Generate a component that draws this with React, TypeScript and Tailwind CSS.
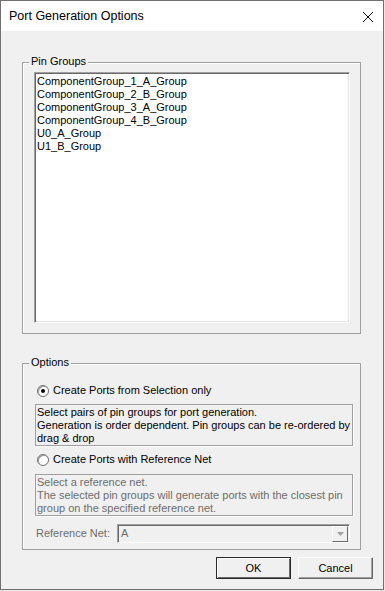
import React, { useState } from 'react';

const PIN_GROUPS = [
  'ComponentGroup_1_A_Group',
  'ComponentGroup_2_B_Group',
  'ComponentGroup_3_A_Group',
  'ComponentGroup_4_B_Group',
  'U0_A_Group',
  'U1_B_Group',
];

function GroupBox({
  label,
  className,
  children,
}: {
  label: string;
  className: string;
  children: React.ReactNode;
}) {
  return (
    <div className={`relative w-[339px] border border-[#a0a0a0] shadow-[inset_1px_1px_0_#ffffff] ${className}`}>
      <span className="absolute -top-[8px] left-[6px] bg-[#f0f0f0] px-[2px] leading-[13px]">{label}</span>
      {children}
    </div>
  );
}

function Radio({ checked, label, onSelect }: { checked: boolean; label: string; onSelect: () => void }) {
  return (
    <button type="button" onClick={onSelect} className="flex items-center gap-[4px] text-left leading-[13px]">
      <span className="flex h-[12px] w-[12px] items-center justify-center rounded-full border border-[#6e6e6e] bg-white shadow-[inset_1px_1px_0_#a0a0a0]">
        {checked ? <span className="h-[4px] w-[4px] rounded-full bg-black" /> : null}
      </span>
      <span>{label}</span>
    </button>
  );
}

export default function App() {
  const [mode, setMode] = useState<'selection' | 'reference'>('selection');

  return (
    <div className="h-[591px] w-[385px] bg-[#e8e8e8]">
      <div
        className="flex h-[590px] w-[384px] flex-col border border-[#707070] bg-[#f0f0f0] text-[11px] text-black"
        style={{ fontFamily: '"Liberation Sans", Arial, sans-serif' }}
      >
        <div className="flex h-[30px] shrink-0 items-center justify-between bg-white pl-[8px] pr-[9px]">
          <span className="text-[12.5px]">Port Generation Options</span>
          <svg width="12" height="12" viewBox="0 0 12 12" className="mt-[1px]">
            <path d="M1 1 L11 11 M11 1 L1 11" stroke="#111" strokeWidth="1" />
          </svg>
        </div>

        <GroupBox label="Pin Groups" className="ml-[21px] mt-[31px] h-[272px] pl-[11px] pr-[10px] pt-[9px]">
          <ul className="h-[251px] w-[316px] border border-b-white border-l-[#a0a0a0] border-r-white border-t-[#a0a0a0] bg-white pl-[1px] pt-[2px] leading-[13px] shadow-[inset_1px_1px_0_#696969,inset_-1px_-1px_0_#e3e3e3]">
            {PIN_GROUPS.map((g) => (
              <li key={g} className="pl-[1px]">
                {g}
              </li>
            ))}
          </ul>
        </GroupBox>

        <GroupBox label="Options" className="ml-[21px] mt-[29px] h-[187px] pl-[12px] pr-[7px]">
          <div className="mt-[20px] pl-[2px]">
            <Radio checked={mode === 'selection'} label="Create Ports from Selection only" onSelect={() => setMode('selection')} />
          </div>
          <div className="mt-[7px] h-[42px] w-[318px] border border-[#a0a0a0] pl-[1px] pt-[1px] leading-[13px] shadow-[1px_1px_0_#ffffff]">
            Select pairs of pin groups for port generation.
            <br />
            Generation is order dependent. Pin groups can be re-ordered by drag &amp; drop
          </div>
          <div className="mt-[7px] pl-[2px]">
            <Radio checked={mode === 'reference'} label="Create Ports with Reference Net" onSelect={() => setMode('reference')} />
          </div>
          <div className="mt-[8px] h-[42px] w-[318px] border border-[#a0a0a0] pl-[1px] pt-[1px] leading-[13px] text-[#6d6d6d] shadow-[1px_1px_0_#ffffff]">
            Select a reference net.
            <br />
            The selected pin groups will generate ports with the closest pin group on the specified reference net.
          </div>
          <div className="mt-[8px] flex items-center">
            <span className="w-[82px] pl-[1px] text-[#6d6d6d]">Reference Net:</span>
            <div className="flex h-[19px] w-[233px] items-center justify-between border border-b-white border-l-[#a0a0a0] border-r-white border-t-[#a0a0a0] bg-[#f0f0f0] pl-[3px] pr-[1px] text-[#6d6d6d] shadow-[inset_1px_1px_0_#696969]">
              <span>A</span>
              <span className="flex h-[16px] w-[16px] items-center justify-center border border-b-[#696969] border-l-white border-r-[#696969] border-t-white bg-[#f0f0f0]">
                <svg width="7" height="4" viewBox="0 0 7 4">
                  <path d="M0 0 H7 L3.5 4 Z" fill="#a0a0a0" />
                </svg>
              </span>
            </div>
          </div>
        </GroupBox>

        <div className="mr-[10px] mt-[7px] flex justify-end gap-[7px]">
          <button
            type="button"
            className="h-[22px] w-[75px] border border-[#2a2a2a] bg-[#f0f0f0] shadow-[inset_1px_1px_0_#ffffff,inset_-1px_-1px_0_#696969]"
          >
            OK
          </button>
          <button
            type="button"
            className="h-[22px] w-[75px] border border-b-[#696969] border-l-white border-r-[#696969] border-t-white bg-[#f0f0f0] shadow-[inset_-1px_-1px_0_#a0a0a0]"
          >
            Cancel
          </button>
        </div>
      </div>
    </div>
  );
}
